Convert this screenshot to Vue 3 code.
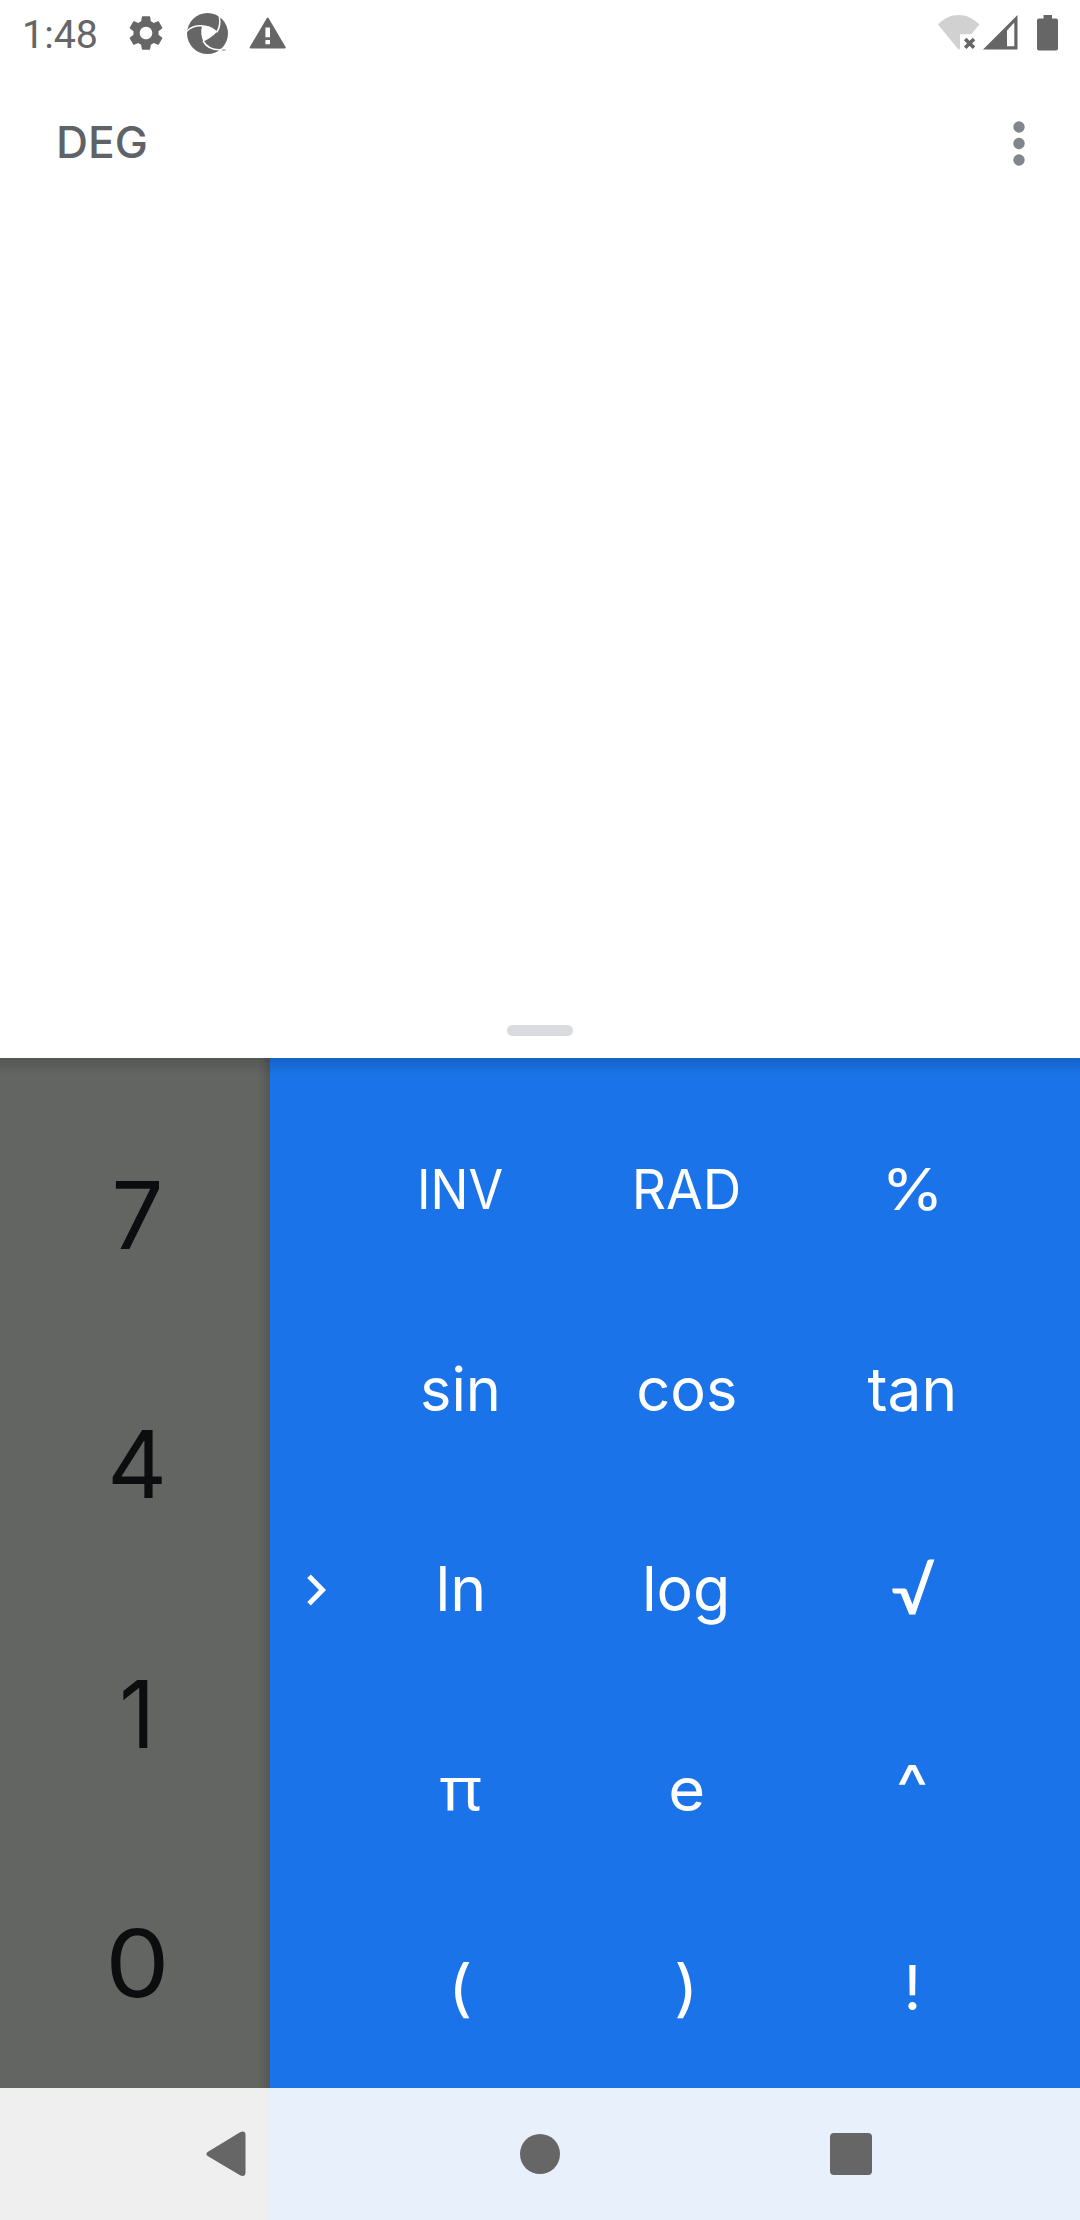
<script setup>
const digits = [
  { t: '7', k: 0.98, y: 1 },
  { t: '4', k: 0.99 },
  { t: '1', k: 0.94, y: 1 },
  { t: '0', k: 1.09 },
]

// s: font size, k: horizontal stretch, y: baseline correction
const functions = [
  { t: 'INV', s: 55, k: 0.915, y: 1 },
  { t: 'RAD', s: 55, k: 0.97, y: 1 },
  { t: '%', s: 58, k: 1.09, y: 0 },
  { t: 'sin', s: 61, k: 0.975, y: 1 },
  { t: 'cos', s: 61, k: 0.975, y: 1 },
  { t: 'tan', s: 61, k: 0.99, y: 1 },
  { t: 'ln', s: 62, k: 0.98, y: 1 },
  { t: 'log', s: 62, k: 0.98, y: 1 },
  { t: '√', s: 63, k: 1.08, y: 1, f: 'lato' },
  { t: 'π', s: 60, k: 1.08, y: -1, f: 'noto' },
  { t: 'e', s: 61, k: 1.04, y: 1 },
  { t: '^', s: 64, k: 1.07, y: -1 },
  { t: '(', s: 62, k: 1.08 },
  { t: ')', s: 62, k: 1.08 },
  { t: '!', s: 62, k: 1 },
]

const keyStyle = ({ s, k, y = 0 }) => ({
  fontSize: s ? `${s}px` : undefined,
  transform: `translateY(${y}px) scaleX(${k})`,
})
</script>

<template>
  <div class="screen">
    <section class="display">
      <header class="status">
        <span class="clock">1:48</span>
        <svg class="gear" viewBox="0 0 24 24"><path d="M19.14 12.94c.04-.3.06-.61.06-.94 0-.32-.02-.64-.07-.94l2.03-1.58c.18-.14.23-.41.12-.61l-1.92-3.32c-.12-.22-.37-.29-.59-.22l-2.39.96c-.5-.38-1.03-.7-1.62-.94l-.36-2.54c-.04-.24-.24-.41-.48-.41h-3.84c-.24 0-.43.17-.47.41l-.36 2.54c-.59.24-1.13.57-1.62.94l-2.39-.96c-.22-.08-.47 0-.59.22L2.74 8.87c-.12.21-.08.47.12.61l2.03 1.58c-.05.3-.09.63-.09.94s.02.64.07.94l-2.03 1.58c-.18.14-.23.41-.12.61l1.92 3.32c.12.22.37.29.59.22l2.39-.96c.5.38 1.03.7 1.62.94l.36 2.54c.05.24.24.41.48.41h3.84c.24 0 .44-.17.47-.41l.36-2.54c.59-.24 1.13-.56 1.62-.94l2.39.96c.22.08.47 0 .59-.22l1.92-3.32c.12-.22.07-.47-.12-.61l-2.01-1.58zM12 15.6c-1.98 0-3.6-1.62-3.6-3.6s1.62-3.6 3.6-3.6 3.6 1.62 3.6 3.6-1.62 3.6-3.6 3.6z" /></svg>
        <svg class="aperture" viewBox="0 0 123 123">
          <circle cx="61.5" cy="61.5" r="61.5" />
          <g fill="none" stroke="#fff" stroke-width="4.5">
            <path d="M-2 56C14 38 54 27 89 57" />
            <path d="M95 0C101 24 100 42 89 58" />
            <path d="M48 84C60 104 82 114 112 109" />
          </g>
          <path fill="#fff" d="M45 40C60 36 78 42 89 57C80 69 65 78 49 86C42 70 41 54 45 40Z" />
          <path d="M105 109h11v4h-11z" opacity=".6" />
        </svg>
        <svg class="warning" viewBox="0 0 24 24"><path d="M1.6 21h20.8c.5 0 .8-.5.5-.9L12.5 2.5c-.3-.5-.8-.5-1 0L1.1 20.1c-.3.4 0 .9.5.9zM13.4 18.4h-2.8v-2.6h2.8zm0-4.2h-2.8V8.300h2.800z" /></svg>
        <span class="spacer"></span>
        <svg class="wifi" width="42" height="36" viewBox="0 0 42 36">
          <path fill="#d1d1d1" d="M0 9.500C6 3.300 13 0 20.700 0S35 3.300 41.300 9.500L33.200 19.300H22V33.500L20.700 34.800Z" />
          <path fill="none" stroke="#666" stroke-width="3.600" d="M27.200 24 36 32.800M36 24 27.200 32.800" />
        </svg>
        <svg class="signal" width="35" height="35" viewBox="0 0 35 35"><path fill-rule="evenodd" d="M0 34.500 34.500 0V34.500ZM24 15.500V31.300H31.300V8.200H30.600Z" /></svg>
        <svg class="battery" width="21" height="36" viewBox="0 0 21 36"><path d="M6.500 0h8.500v3.500h4q2 0 2 2v28q0 2-2 2h-17q-2 0-2-2v-28q0-2 2-2h4.500z" /></svg>
      </header>
      <div class="toolbar">
        <span class="mode">DEG</span>
        <svg class="more" width="12" height="45" viewBox="0 0 12 45">
          <circle cx="6" cy="6" r="5.700" /><circle cx="6" cy="22.500" r="5.700" /><circle cx="6" cy="39" r="5.700" />
        </svg>
      </div>
      <div class="handle"></div>
    </section>

    <main class="pads">
      <div class="digits">
        <div v-for="d in digits" :key="d.t" class="key"><span :style="keyStyle(d)">{{ d.t }}</span></div>
      </div>
      <div class="advanced">
        <div class="toggle">
          <svg width="22" height="34" viewBox="0 0 22 34"><path fill="none" stroke="#fff" stroke-width="5" d="M3 3.300 16.500 17 3 30.700" /></svg>
        </div>
        <div class="functions">
          <div v-for="f in functions" :key="f.t" class="key"><span :class="f.f" :style="keyStyle(f)">{{ f.t }}</span></div>
        </div>
      </div>
    </main>

    <nav class="nav">
      <div class="slot"><svg class="back" width="40" height="46" viewBox="0 0 40 46"><path d="M1.600 21 34.500 1Q39.500-.700 39.500 4V41.500Q39.500 46.200 34.500 44.500L1.600 25Q-.800 23 1.600 21Z" /></svg></div>
      <div class="slot"><span class="home"></span></div>
      <div class="slot"><span class="recent"></span></div>
    </nav>
  </div>
</template>

<style>
body {
  margin: 0;
}
</style>

<style scoped>
.screen {
  display: flex;
  flex-direction: column;
  width: 1080px;
  height: 2220px;
  overflow: hidden;
  background: #fff;
  font-family: Inter, "Liberation Sans", sans-serif;
}
.display {
  display: flex;
  flex-direction: column;
  flex: none;
  height: 1058px;
  background: #fff;
}
.status {
  display: flex;
  height: 65px;
  padding: 0 22px;
  fill: #666;
}
.status > * {
  flex: none;
}
.status .spacer {
  flex: 1;
}
.clock {
  width: 103px;
  margin-top: 12px;
  font: 39.400px/46px Roboto, sans-serif;
  color: #666;
}
.gear {
  width: 42px;
  height: 42px;
  margin-top: 12px;
}
.aperture {
  width: 41px;
  height: 41px;
  margin: 13px 0 0 20px;
}
.warning {
  width: 39.400px;
  height: 39.400px;
  margin: 14px 0 0 20.300px;
}
.wifi {
  margin-top: 15px;
}
.signal {
  margin: 15px 0 0 2.500px;
}
.battery {
  margin: 15px 0 0 19.500px;
}
.toolbar {
  display: flex;
  align-items: center;
  justify-content: space-between;
  height: 156px;
  padding: 0 55px 0 56px;
}
.mode {
  margin-bottom: 2px;
  font-size: 43.500px;
  font-weight: 500;
  line-height: 50px;
  color: #5f6368;
  transform: scaleX(1.020);
  transform-origin: left;
}
.more {
  fill: #80868b;
}
.handle {
  width: 66px;
  height: 11px;
  margin: auto auto 22px;
  border-radius: 6px;
  background: #dadbdf;
}
.pads {
  display: flex;
  height: 1030px;
}
.digits {
  display: grid;
  grid-template-rows: repeat(4, 1fr);
  box-sizing: border-box;
  width: 270px;
  padding: 32px 0 0 4px;
  background:
    linear-gradient(rgba(0, 0, 0, 0.140), transparent 17px),
    linear-gradient(to left, rgba(0, 0, 0, 0.140), transparent 12px),
    #636563;
  color: #0c0d0f;
  font-size: 93.500px;
}
.key {
  display: flex;
  align-items: center;
  justify-content: center;
  line-height: 1;
}
.advanced {
  display: flex;
  flex: 1;
  background:
    linear-gradient(rgba(0, 0, 0, 0.140), transparent 17px),
    #1a73e8;
  color: #fff;
}
.toggle {
  display: flex;
  align-items: center;
  width: 77.500px;
  padding: 34px 0 0 35.500px;
  box-sizing: border-box;
}
.functions {
  display: grid;
  grid-template: repeat(5, 1fr) / repeat(3, 226px);
  padding-top: 31px;
}
.lato {
  font-family: Lato, sans-serif;
  -webkit-text-stroke: 1px currentColor;
}
.noto {
  font-family: "Noto Sans", sans-serif;
}
.nav {
  display: flex;
  justify-content: center;
  height: 132px;
  background: linear-gradient(to right, #efefef 260px, #ededed 270px, #e8f0fc 270px);
}
.slot {
  display: flex;
  align-items: center;
  justify-content: center;
  width: 311px;
}
.back {
  margin-right: 6px;
  fill: #666;
}
.home {
  width: 40px;
  height: 40px;
  border-radius: 50%;
  background: #666;
}
.recent {
  width: 41.500px;
  height: 41.500px;
  border-radius: 4px;
  background: #666;
}
</style>
